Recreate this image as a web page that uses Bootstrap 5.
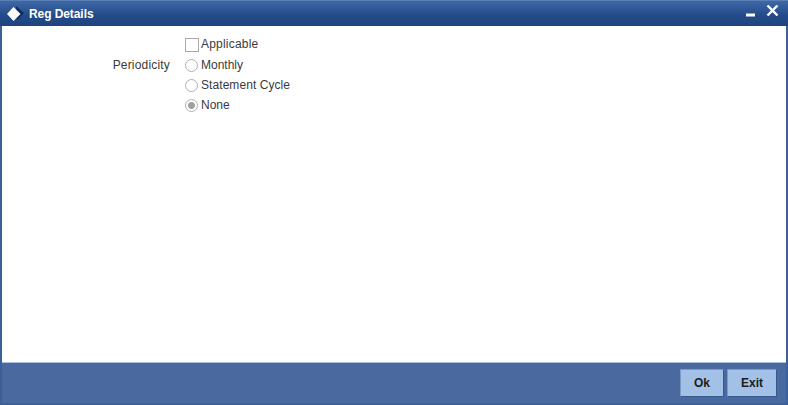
<!DOCTYPE html>
<html lang="en">
<head>
  <meta charset="UTF-8" />
  <title>Reg Details</title>
  <link rel="stylesheet" href="https://cdn.jsdelivr.net/npm/bootstrap@5.3.0/dist/css/bootstrap.min.css" />
  <style>
    html, body { height: 405px; overflow: hidden; }
    body { background: #fff; font-family: "Liberation Sans", Arial, sans-serif; font-size: 12px; color: #3a3a3a; }
    .win { height: 405px; width: 788px; background: #3a5f99; padding: 0 2px 2px 2px; }
    .win-title { height: 26px; margin: 0 -2px; padding: 0 8px 0 7px; color: #fff; font-weight: 700; background: linear-gradient(#3f68a6, #234a88 60%, #1f4480); border-top: 1px solid #5c80b5; }
    .win-title .ttl { margin-left: 5px; letter-spacing: -.08px; }
    .win-body { flex: 1 1 auto; background: #fff; padding-top: 8px; }
    .lbl-col { width: 168px; text-align: right; }
    .lbl-text { letter-spacing: .18px; }
    .opts { margin-left: 15px; }
    .opt-row { height: 20px; }
    .opt-row label { margin-left: 2px; }
    .first-row { height: 21px; }
    .first-row label { margin: -2px 0 0 2px; letter-spacing: .2px; }
    .lbl-wide { letter-spacing: .07px; }
    .chk, .rad { appearance: none; margin: 0; background: #fff; flex: none; }
    .chk { width: 14px; height: 14px; border: 1px solid #a8a8a8; }
    .rad { width: 13px; height: 13px; margin: 0 1px 0 0; border: 1px solid #b0b0b0; border-radius: 50%; }
    .rad:checked { background: radial-gradient(circle, #a0a0a0 0 3px, #fff 4px); }
    .win-foot { height: 41px; background: #4a6a9f; border-top: 1px solid #a9c0e0; padding-right: 9px; gap: 3px; }
    .act-btn { height: 28px; padding: 0; font-size: 12px; font-weight: 700; color: #1c1c1c; background: #a3c1e6; border: 1px solid #33598f; border-top-color: #7d9ac4; border-left-color: #7d9ac4; border-radius: 0; }
    .act-ok { width: 44px; }
    .act-exit { width: 50px; }
  </style>
</head>
<body>
  <div class="win d-flex flex-column">
    <div class="win-title d-flex align-items-center">
      <svg width="17" height="18" viewBox="0 0 17 18">
        <path d="M9 1 L17 8 L10 15 Z" fill="#0f2c5c"/>
        <path d="M6.5 2 L13.5 9 L6.5 16 L0 9 Z" fill="#fff"/>
      </svg>
      <span class="ttl flex-grow-1">Reg Details</span>
      <svg width="42" height="18" viewBox="0 0 42 18">
        <rect x="8" y="8.5" width="9" height="3" fill="#fff"/>
        <path d="M29.5 0.5 L39.5 10.5 M39.5 0.5 L29.5 10.5" stroke="#fff" stroke-width="2.4" fill="none"/>
      </svg>
    </div>
    <div class="win-body">
      <div class="d-flex">
        <div class="lbl-col">
          <div class="first-row"></div>
          <div class="opt-row d-flex align-items-center justify-content-end lbl-text">Periodicity</div>
        </div>
        <div class="opts">
          <div class="first-row d-flex align-items-center">
            <input class="chk" type="checkbox" id="chkApplicable"><label for="chkApplicable">Applicable</label>
          </div>
          <div class="opt-row d-flex align-items-center">
            <input class="rad" type="radio" name="period" id="rdMonthly"><label for="rdMonthly">Monthly</label>
          </div>
          <div class="opt-row d-flex align-items-center">
            <input class="rad" type="radio" name="period" id="rdCycle"><label class="lbl-wide" for="rdCycle">Statement Cycle</label>
          </div>
          <div class="opt-row d-flex align-items-center">
            <input class="rad" type="radio" name="period" id="rdNone" checked><label for="rdNone">None</label>
          </div>
        </div>
      </div>
    </div>
    <div class="win-foot d-flex align-items-center justify-content-end">
      <button class="btn act-btn act-ok" type="button">Ok</button>
      <button class="btn act-btn act-exit" type="button">Exit</button>
    </div>
  </div>
  <script src="https://cdn.jsdelivr.net/npm/bootstrap@5.3.0/dist/js/bootstrap.bundle.min.js"></script>
</body>
</html>
